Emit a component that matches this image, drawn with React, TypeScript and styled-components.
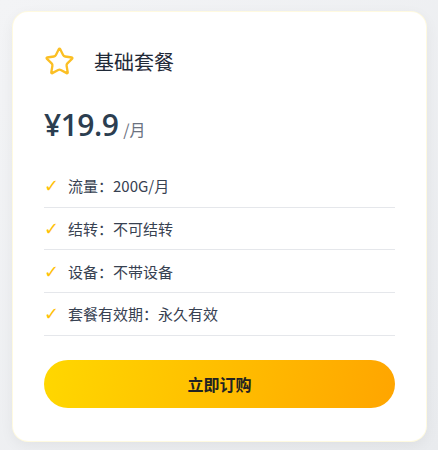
import styled, { createGlobalStyle } from 'styled-components';
import { Star } from 'lucide-react';

const GlobalStyle = createGlobalStyle`
	html, body {
		margin: 0;
		padding: 0;
		background: #eef0f3;
		font-family: 'Noto Sans', 'Noto Sans CJK SC', sans-serif;
	}
	* {
		box-sizing: border-box;
	}
`;

const Page = styled.div`
	padding: 11px 11px 10px 12px;
	min-height: 450px;
	background: linear-gradient(135deg, #f3f4f6 0%, #e9ebee 100%);
`;

const Card = styled.div`
	background: #ffffff;
	border-radius: 16px;
	border: 1px solid rgba(255, 215, 0, 0.12);
	box-shadow: 0 4px 14px rgba(0, 0, 0, 0.05);
	padding: 29px 31px 33px 31px;
	display: flex;
	flex-direction: column;
`;

const Header = styled.div`
	display: flex;
	align-items: center;
	gap: 19px;
	height: 40px;
`;

const Title = styled.h3`
	margin: 0;
	font-size: 20px;
	font-weight: 400;
	color: #1f2937;
	font-family: 'Noto Sans CJK SC', sans-serif;
`;

const PriceRow = styled.div`
	display: flex;
	align-items: baseline;
	gap: 5px;
	margin-top: 24px;
	color: #2c3e50;
`;

const Price = styled.span`
	font-size: 30px;
	font-weight: 600;
	line-height: 40px;
	letter-spacing: -0.5px;
	font-family: 'Open Sans', sans-serif;
`;

const Unit = styled.span`
	font-size: 16px;
	color: #6b7280;
	font-family: 'Noto Sans CJK SC', sans-serif;
`;

const Features = styled.ul`
	list-style: none;
	margin: 20px 0 0;
	padding: 0;
`;

const Feature = styled.li`
	display: flex;
	align-items: center;
	gap: 10px;
	height: 42.7px;
	border-bottom: 1px solid #e5e7eb;
	font-size: 15px;
	color: #374151;
	font-family: 'Noto Sans CJK SC', sans-serif;
`;

const Check = styled.span`
	color: #ffc107;
	font-size: 18px;
	font-weight: 700;
	width: 14px;
	font-family: 'DejaVu Sans', sans-serif;
`;

const BuyButton = styled.button`
	margin-top: 24px;
	height: 48px;
	border: none;
	border-radius: 24px;
	background: linear-gradient(100deg, #ffd700 0%, #ffa500 100%);
	color: #222222;
	font-size: 16px;
	font-weight: 700;
	font-family: 'Noto Sans CJK SC', sans-serif;
	cursor: pointer;
`;

const features = ['流量：200G/月', '结转：不可结转', '设备：不带设备', '套餐有效期：永久有效'];

function App(): JSX.Element {
	return (
		<>
			<GlobalStyle />
			<Page>
				<Card>
					<Header>
						<Star size={31} color="#fbbf24" strokeWidth={1.8} />
						<Title>基础套餐</Title>
					</Header>
					<PriceRow>
						<Price>¥19.9</Price>
						<Unit>/月</Unit>
					</PriceRow>
					<Features>
						{features.map((f) => (
							<Feature key={f}>
								<Check>✓</Check>
								{f}
							</Feature>
						))}
					</Features>
					<BuyButton>立即订购</BuyButton>
				</Card>
			</Page>
		</>
	);
}

export default App;
